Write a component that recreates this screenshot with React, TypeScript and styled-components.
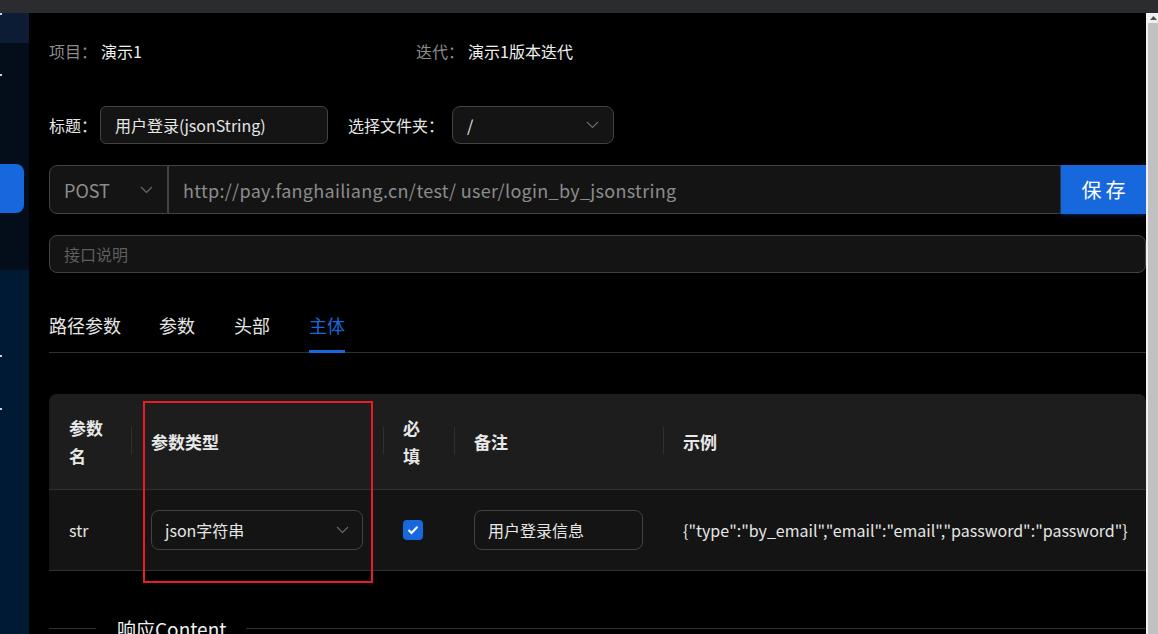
import React from "react";
import styled, { createGlobalStyle } from "styled-components";

const Global = createGlobalStyle`
  html, body { margin: 0; padding: 0; background: #000; }
  body { font-family: "Noto Sans CJK SC", "Noto Sans", sans-serif; overflow: hidden; }
  * { box-sizing: border-box; }
`;

const Frame = styled.div`
  width: 1158px;
  height: 634px;
  display: flex;
  flex-direction: column;
  overflow: hidden;
  background: #000;
`;

const TopBar = styled.div`
  height: 13px;
  flex: none;
  background: #2b2c30;
`;

const Body = styled.div`
  flex: 1;
  display: flex;
  min-height: 0;
`;

const Sidebar = styled.div`
  width: 29px;
  flex: none;
  display: flex;
  flex-direction: column;
`;

const SideSection = styled.div<{ $h?: number; $bg: string }>`
  position: relative;
  background: ${(p) => p.$bg};
  ${(p) => (p.$h ? `height: ${p.$h}px; flex: none;` : "flex: 1;")}
`;

const Dot = styled.span<{ $top: number }>`
  position: absolute;
  left: 0;
  top: ${(p) => p.$top}px;
  width: 2px;
  height: 2px;
  background: #d0d4da;
`;

const SideActive = styled.div`
  margin-top: 121px;
  width: 24px;
  height: 49px;
  background: #1668dc;
  border-radius: 0 8px 8px 0;
`;

const Main = styled.div`
  flex: 1;
  padding: 26px 0 0 20px;
  display: flex;
  flex-direction: column;
  min-width: 0;
`;

const InfoRow = styled.div`
  display: flex;
  height: 26px;
  align-items: center;
  font-size: 16px;
`;

const InfoItem = styled.div<{ $w?: number }>`
  ${(p) => (p.$w ? `width: ${p.$w}px;` : "")}
  display: flex;
  align-items: center;
`;

const Label = styled.span`
  color: #8c8c8c;
  font-size: 16px;
  white-space: nowrap;
`;

const Value = styled.span`
  color: #f0f0f0;
  font-size: 16px;
  margin-left: 4px;
`;

const FormRow = styled.div<{ $mt: number }>`
  display: flex;
  align-items: center;
  margin-top: ${(p) => p.$mt}px;
`;

const FieldLabel = styled.span<{ $gap?: number }>`
  color: #e6e6e6;
  font-size: 16px;
  margin-right: ${(p) => p.$gap ?? 3}px;
  white-space: nowrap;
`;

const Field = styled.div<{ $w?: number; $h?: number; $radius?: string; $color?: string; $size?: number; $mr?: number; $ls?: number }>`
  ${(p) => (p.$w ? `width: ${p.$w}px; flex: none;` : "flex: 1;")}
  height: ${(p) => p.$h ?? 38}px;
  background: #141414;
  border: 1px solid #424242;
  border-radius: ${(p) => p.$radius ?? "6px"};
  display: flex;
  align-items: center;
  justify-content: space-between;
  padding: 0 14px;
  color: ${(p) => p.$color ?? "#e6e6e6"};
  font-size: ${(p) => p.$size ?? 16}px;
  letter-spacing: ${(p) => p.$ls ?? 0}px;
  white-space: nowrap;
  overflow: hidden;
  margin-right: ${(p) => p.$mr ?? 0}px;
`;

const SaveButton = styled.button`
  width: 85px;
  height: 49px;
  flex: none;
  border: none;
  background: #1668dc;
  color: #fff;
  font-family: inherit;
  font-size: 20px;
  letter-spacing: 4px;
  padding: 0 0 0 4px;
  box-shadow: 0 2px 3px rgba(5, 30, 80, 0.8);
`;

const Chevron = () => (
  <svg width="13" height="8" viewBox="0 0 13 8" fill="none">
    <polyline points="1,1 6.5,6.5 12,1" stroke="#6b6b6b" strokeWidth="1.1" />
  </svg>
);

const Tabs = styled.div`
  margin-top: 30px;
  display: flex;
  border-bottom: 1px solid #303030;
`;

const Tab = styled.div<{ $active?: boolean; $w: number }>`
  position: relative;
  width: ${(p) => p.$w}px;
  padding: 10px 0 15px;
  line-height: 24px;
  font-size: 18px;
  color: ${(p) => (p.$active ? "#1668dc" : "#e6e6e6")};
  white-space: nowrap;
  &::after {
    content: "";
    display: ${(p) => (p.$active ? "block" : "none")};
    position: absolute;
    left: 0;
    bottom: -1px;
    width: 36px;
    height: 3px;
    background: #1668dc;
  }
`;

const TableWrap = styled.div`
  position: relative;
  margin-top: 41px;
`;

const Grid = styled.div`
  display: grid;
  grid-template-columns: 82px 252px 71px 209px 1fr;
  border-radius: 8px 8px 0 0;
  overflow: hidden;
`;

const HeadCell = styled.div<{ $sep?: boolean }>`
  position: relative;
  height: 96px;
  background: #1d1d1d;
  border-bottom: 1px solid #303030;
  padding: 0 20px;
  display: flex;
  align-items: center;
  font-size: 17px;
  font-weight: 700;
  line-height: 28px;
  color: #e8e8e8;
  &::before {
    content: "";
    display: ${(p) => (p.$sep ? "block" : "none")};
    position: absolute;
    left: 0;
    top: 33px;
    width: 1px;
    height: 27px;
    background: #303030;
  }
`;

const BodyCell = styled.div`
  height: 81px;
  background: #141414;
  border-bottom: 1px solid #303030;
  padding: 0 20px;
  display: flex;
  align-items: center;
  font-size: 16px;
  color: #e6e6e6;
  white-space: nowrap;
`;

const CellField = styled.div`
  flex: 1;
  height: 40px;
  border: 1px solid #424242;
  border-radius: 8px;
  background: #141414;
  display: flex;
  align-items: center;
  justify-content: space-between;
  padding: 0 13px 0 13px;
  font-size: 16px;
  color: #e6e6e6;
`;

const Check = styled.span`
  width: 20px;
  height: 20px;
  border-radius: 4px;
  background: #1668dc;
  display: flex;
  align-items: center;
  justify-content: center;
`;

const Highlight = styled.div`
  position: absolute;
  left: 94px;
  top: 7px;
  width: 230px;
  height: 182px;
  border: 2px solid #e81d28;
  pointer-events: none;
`;

const Divider = styled.div`
  margin-top: 44px;
  display: flex;
  align-items: center;
  height: 26px;
  font-size: 19px;
  color: #f0f0f0;
  &::before {
    content: "";
    width: 47px;
    height: 1px;
    background: #303030;
  }
  &::after {
    content: "";
    flex: 1;
    height: 1px;
    background: #303030;
  }
`;

const DividerText = styled.span`
  padding: 0 20px 0 21px;
  white-space: nowrap;
`;

const Scrollbar = styled.div`
  width: 12px;
  flex: none;
  background: #f1f1f1;
  display: flex;
  flex-direction: column;
`;

const ScrollArrow = styled.div`
  height: 10px;
  display: flex;
  align-items: center;
  justify-content: center;
  padding-left: 2px;
`;

const Thumb = styled.div`
  flex: 1;
  margin-left: 2px;
  background: #c1c1c1;
`;

export default function App() {
  return (
    <>
      <Global />
      <Frame>
        <TopBar />
        <Body>
          <Sidebar>
            <SideSection $h={30} $bg="#0b1c34">
              <Dot $top={0} />
            </SideSection>
            <SideSection $h={227} $bg="#040e1b">
              <Dot $top={31} />
              <SideActive />
            </SideSection>
            <SideSection $bg="#011a33">
              <Dot $top={85} />
              <Dot $top={138} />
            </SideSection>
          </Sidebar>
          <Main>
            <InfoRow>
              <InfoItem $w={367}>
                <Label>项目：</Label>
                <Value>演示1</Value>
              </InfoItem>
              <InfoItem>
                <Label>迭代：</Label>
                <Value>演示1版本迭代</Value>
              </InfoItem>
            </InfoRow>
            <FormRow $mt={43}>
              <FieldLabel>标题：</FieldLabel>
              <Field $w={228} $mr={20}>用户登录(jsonString)</Field>
              <FieldLabel $gap={8}>选择文件夹：</FieldLabel>
              <Field $w={162} $radius="8px">
                <span>/</span>
                <Chevron />
              </Field>
            </FormRow>
            <FormRow $mt={21}>
              <Field $w={119} $h={49} $radius="8px 0 0 8px" $color="#8c8c8c" $size={18}>
                <span>POST</span>
                <Chevron />
              </Field>
              <Field $h={49} $radius="0" $color="#8c8c8c" $size={18} $ls={0.3}>
                http://pay.fanghailiang.cn/test/ user/login_by_jsonstring
              </Field>
              <SaveButton>保存</SaveButton>
            </FormRow>
            <FormRow $mt={21}>
              <Field $radius="8px" $color="#5e5e5e">接口说明</Field>
            </FormRow>
            <Tabs>
              <Tab $w={110}>路径参数</Tab>
              <Tab $w={75}>参数</Tab>
              <Tab $w={75}>头部</Tab>
              <Tab $w={60} $active>
                主体
              </Tab>
            </Tabs>
            <TableWrap>
              <Grid>
                <HeadCell>参数名</HeadCell>
                <HeadCell $sep>参数类型</HeadCell>
                <HeadCell $sep>必填</HeadCell>
                <HeadCell $sep>备注</HeadCell>
                <HeadCell $sep>示例</HeadCell>
                <BodyCell>str</BodyCell>
                <BodyCell>
                  <CellField>
                    <span>json字符串</span>
                    <Chevron />
                  </CellField>
                </BodyCell>
                <BodyCell>
                  <Check>
                    <svg width="12" height="10" viewBox="0 0 12 10" fill="none">
                      <polyline points="1.5,5 4.5,8 10.5,1.8" stroke="#fff" strokeWidth="2" />
                    </svg>
                  </Check>
                </BodyCell>
                <BodyCell>
                  <CellField>用户登录信息</CellField>
                </BodyCell>
                <BodyCell>{'{"type":"by_email","email":"email","password":"password"}'}</BodyCell>
              </Grid>
              <Highlight />
            </TableWrap>
            <Divider>
              <DividerText>响应Content</DividerText>
            </Divider>
          </Main>
          <Scrollbar>
            <ScrollArrow>
              <svg width="7" height="4" viewBox="0 0 7 4">
                <polygon points="0,4 3.5,0 7,4" fill="#505050" />
              </svg>
            </ScrollArrow>
            <Thumb />
          </Scrollbar>
        </Body>
      </Frame>
    </>
  );
}
